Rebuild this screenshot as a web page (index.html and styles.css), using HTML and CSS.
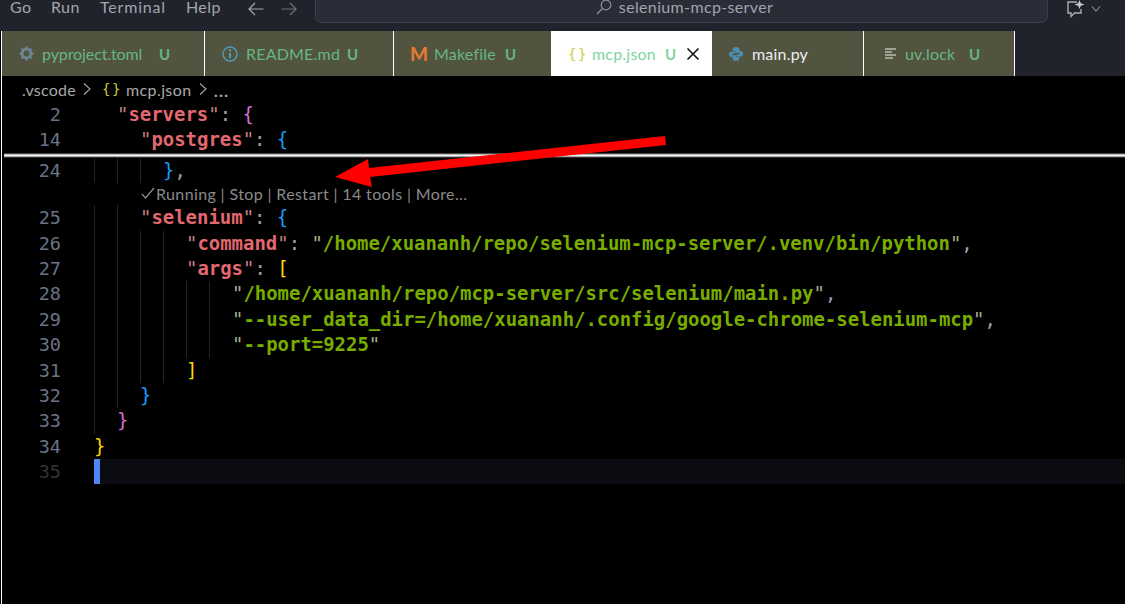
FILE: index.html
```html
<!DOCTYPE html>
<html lang="en">
<head>
<meta charset="utf-8">
<title>selenium-mcp-server</title>
<link rel="stylesheet" href="styles.css">
</head>
<body>
<div class="app">
  <header class="titlebar">
    <nav class="menu"><span class="m-go">Go</span><span class="m-run">Run</span><span class="m-term">Terminal</span><span class="m-help">Help</span></nav>
    <div class="nav-arrows">
      <svg width="16" height="14" viewBox="0 0 16 14"><path d="M15.5 7H1M7 1 1 7l6 6" fill="none" stroke="#a3a8b0" stroke-width="1.2"/></svg>
      <svg width="16" height="14" viewBox="0 0 16 14"><path d="M.5 7H15M9 1l6 6-6 6" fill="none" stroke="#6d727b" stroke-width="1.2"/></svg>
    </div>
    <div class="command">
      <svg width="16" height="16" viewBox="0 0 16 16"><circle cx="10" cy="6" r="4.8" fill="none" stroke="#8d929a" stroke-width="1.2"/><path d="M6.5 9.5 1 15" stroke="#8d929a" stroke-width="1.3"/></svg>
      <span>selenium-mcp-server</span>
    </div>
    <div class="chat">
      <svg width="20" height="18" viewBox="0 0 20 18"><path d="M11 2H2v11h3v3.5L8.5 13H15V9" fill="none" stroke="#a9aeb6" stroke-width="1.4"/><path d="M13.5 0l1.3 3.2L18.500 4.500 14.800 5.800 13.500 9 12.200 5.800 8.500 4.500 12.200 3.200z" fill="#c6cad2"/></svg>
      <svg width="10" height="6" viewBox="0 0 10 6"><path d="M1 .5 5 5 9 .5" fill="none" stroke="#8d929a" stroke-width="1.1"/></svg>
    </div>
  </header>
  <main class="main">
    <div class="tabs">
      <div class="tab t1">
        <svg class="ic-gear" width="15" height="15" viewBox="0 0 16 16"><circle cx="8" cy="8" r="4.6" fill="none" stroke="#6f8792" stroke-width="3"/><path d="M8 .5v3M8 12.500v3M.5 8h3M12.500 8h3M2.700 2.700l2.100 2.100M11.200 11.200l2.100 2.100M13.300 2.700l-2.100 2.100M4.800 11.200l-2.100 2.100" stroke="#6f8792" stroke-width="2.400"/></svg>
        <span class="name">pyproject.toml</span><b class="u">U</b>
      </div>
      <div class="tab t2">
        <svg width="16" height="16" viewBox="0 0 16 16"><circle cx="8" cy="8" r="7" fill="none" stroke="#519aba" stroke-width="1.400"/><path d="M8 7v5.200" stroke="#519aba" stroke-width="2"/><circle cx="8" cy="4.500" r="1.200" fill="#519aba"/></svg>
        <span class="name">README.md</span><b class="u">U</b>
      </div>
      <div class="tab t3">
        <span class="ic-m">M</span>
        <span class="name">Makefile</span><b class="u">U</b>
      </div>
      <div class="tab active">
        <span class="ic-json">{}</span>
        <span class="name">mcp.json</span><b class="u">U</b>
        <svg class="close" width="14" height="14" viewBox="0 0 14 14"><path d="M1.500 1.500l11 11M12.500 1.500l-11 11" stroke="#111" stroke-width="1.600"/></svg>
      </div>
      <div class="tab t5">
        <svg width="14" height="14" viewBox="0 0 14 14"><path d="M7 0C4.500 0 3.700 1 3.700 2.300V4H7.200v.6H2.300C1 4.600 0 5.600 0 7.200s1 2.900 2.200 2.900h1.300V8.400c0-1.300 1-2.300 2.300-2.300h2.900c1 0 1.800-.8 1.800-1.900V2.300C10.500 1 9.300 0 7 0z" fill="#4b8fb5"/><path d="M7 14c2.500 0 3.300-1 3.300-2.300V10H6.800v-.6h4.900c1.300 0 2.300-1 2.300-2.600s-1-2.900-2.200-2.900h-1.300v1.700c0 1.300-1 2.300-2.300 2.300H5.300c-1 0-1.800.8-1.800 1.900v1.900C3.500 13 4.700 14 7 14z" fill="#4b8fb5"/></svg>
        <span class="name white">main.py</span>
      </div>
      <div class="tab t6">
        <svg width="12" height="14" viewBox="0 0 12 14"><path d="M0 2h11M0 5h7M0 8h11M0 11h8" stroke="#b9bdb0" stroke-width="1.500"/></svg>
        <span class="name">uv.lock</span><b class="u">U</b>
      </div>
    </div>
    <div class="crumbs">
      <span>.vscode</span>
      <svg class="chev" width="8" height="14" viewBox="0 0 8 14"><path d="M1 1.500 7 7l-6 5.500" fill="none" stroke="#a8a8a8" stroke-width="1.100"/></svg>
      <span class="ic-json crumb-json">{}</span>
      <span class="crumb-file">mcp.json</span>
      <svg class="chev" width="8" height="14" viewBox="0 0 8 14"><path d="M1 1.500 7 7l-6 5.500" fill="none" stroke="#a8a8a8" stroke-width="1.100"/></svg>
      <span class="dots">…</span>
    </div>
    <div class="line"><span class="num">2</span><span class="sp"></span><span class="code"><i class="kq">"</i><i class="key">servers</i><i class="kq">"</i><i class="pn">: </i><i class="pink">{</i></span></div>
    <div class="line"><span class="num">14</span><span class="sp"></span><span class="sp"></span><span class="code"><i class="kq">"</i><i class="key">postgres</i><i class="kq">"</i><i class="pn">: </i><i class="blue">{</i></span></div>
    <div class="sep"></div>
    <div class="line"><span class="num">24</span><span class="ind"></span><span class="ind"></span><span class="ind"></span><span class="code"><i class="blue">}</i><i class="pn">,</i></span></div>
    <div class="lens">
      <svg width="14" height="12" viewBox="0 0 14 12"><path d="M1 7l3.500 4L13 1" fill="none" stroke="#8d8d8d" stroke-width="1.200"/></svg>
      <span>Running | Stop | Restart | 14 tools | More...</span>
    </div>
    <div class="line"><span class="num">25</span><span class="ind"></span><span class="ind"></span><span class="code"><i class="kq">"</i><i class="key">selenium</i><i class="kq">"</i><i class="pn">: </i><i class="blue">{</i></span></div>
    <div class="line"><span class="num">26</span><span class="ind"></span><span class="ind"></span><span class="ind"></span><span class="ind"></span><span class="code"><i class="kq">"</i><i class="key">command</i><i class="kq">"</i><i class="pn">: </i><i class="sq">"</i><i class="str">/home/xuananh/repo/selenium-mcp-server/.venv/bin/python</i><i class="sq">"</i><i class="pn">,</i></span></div>
    <div class="line"><span class="num">27</span><span class="ind"></span><span class="ind"></span><span class="ind"></span><span class="ind"></span><span class="code"><i class="kq">"</i><i class="key">args</i><i class="kq">"</i><i class="pn">: </i><i class="gold">[</i></span></div>
    <div class="line"><span class="num">28</span><span class="ind"></span><span class="ind"></span><span class="ind"></span><span class="ind"></span><span class="ind"></span><span class="ind"></span><span class="code"><i class="sq">"</i><i class="str">/home/xuananh/repo/mcp-server/src/selenium/main.py</i><i class="sq">"</i><i class="pn">,</i></span></div>
    <div class="line"><span class="num">29</span><span class="ind"></span><span class="ind"></span><span class="ind"></span><span class="ind"></span><span class="ind"></span><span class="ind"></span><span class="code"><i class="sq">"</i><i class="str">--user_data_dir=/home/xuananh/.config/google-chrome-selenium-mcp</i><i class="sq">"</i><i class="pn">,</i></span></div>
    <div class="line"><span class="num">30</span><span class="ind"></span><span class="ind"></span><span class="ind"></span><span class="ind"></span><span class="ind"></span><span class="ind"></span><span class="code"><i class="sq">"</i><i class="str">--port=9225</i><i class="sq">"</i></span></div>
    <div class="line"><span class="num">31</span><span class="ind"></span><span class="ind"></span><span class="ind"></span><span class="ind"></span><span class="code"><i class="gold">]</i></span></div>
    <div class="line"><span class="num">32</span><span class="ind"></span><span class="ind"></span><span class="code"><i class="blue">}</i></span></div>
    <div class="line"><span class="num">33</span><span class="ind"></span><span class="code"><i class="pink">}</i></span></div>
    <div class="line"><span class="num">34</span><span class="code"><i class="gold">}</i></span></div>
    <div class="line current"><span class="num dim">35</span><span class="cursor"></span><span class="hl"></span></div>
  </main>
  <svg class="arrow" width="340" height="60" viewBox="330 130 340 60"><polygon points="665,136 666,145 370,177 372,187 335,177 368,159 369,168" fill="#ff0000"/></svg>
</div>
</body>
</html>
```
FILE: styles.css
```css
* { box-sizing: border-box; }
html, body { margin: 0; height: 100%; background: #000; overflow: hidden; }
.app { position: relative; width: 1125px; height: 604px; font-family: "Lato", "Noto Sans", sans-serif; }

.titlebar { display: flex; height: 31px; background: #20232b; color: #a1a6ae; font-size: 16px; overflow: hidden; }
.menu { display: flex; height: 14px; line-height: 14px; padding-left: 10px; letter-spacing: .4px; }
.menu span { display: block; }
.m-go { width: 41px; }
.m-run { width: 49px; }
.m-term { width: 86px; letter-spacing: .8px; }
.m-help { width: 48px; }
.nav-arrows { display: flex; gap: 17px; padding: 2px 0 0 14px; width: 78px; }
.command { display: flex; align-items: center; justify-content: center; gap: 7px; width: 733px; height: 23px; margin-left: 3px; padding: 0 0 8px 6px; background: #2a2d37; border: 1px solid #3c3f49; border-top: 0; border-radius: 0 0 7px 7px; color: #9fa4ac; letter-spacing: .35px; line-height: 14px; }
.chat { display: flex; align-items: center; gap: 5px; height: 18px; margin-left: 18px; }

.main { margin-left: 1px; border-left: 1px solid #fff; height: 573px; background: #000; }

.tabs { display: flex; height: 45px; background: #20232b; }
.tab { display: flex; align-items: center; flex: none; background: #52543f; border-right: 1px solid #fff; color: #66b77f; font-size: 16px; letter-spacing: .2px; }
.tab svg, .tab .ic-m, .tab .ic-json { flex: none; }
.name { display: block; }
.white { color: #eceff1; }
.u { font-weight: 700; font-size: 15px; color: #66b77f; }
.t1 { width: 203px; padding-left: 17px; }
.t1 .name { width: 117px; margin-left: 8px; letter-spacing: -.1px; }
.t2 { width: 189px; padding-left: 17px; }
.t2 .name { width: 101px; margin-left: 8px; }
.t3 { width: 157px; padding-left: 16px; border-right: 0; }
.t3 .name { width: 71px; margin-left: 8px; }
.ic-m { width: 16px; color: #e37933; font-weight: 900; font-size: 19px; line-height: 1; }
.active { width: 161px; padding-left: 17px; background: #fff; border-right: 0; color: #7fd3a0; }
.active .name { width: 73px; margin-left: 6px; }
.active .u { color: #7fd3a0; }
.close { margin-left: 10px; }
.ic-json { color: #cbcb41; font-family: "DejaVu Sans Mono", monospace; font-weight: 400; font-size: 14px; width: 18px; white-space: nowrap; letter-spacing: 1.6px; }
.t5 { width: 152px; padding-left: 17px; }
.t5 .name { margin-left: 9px; }
.t6 { width: 151px; padding-left: 21px; }
.t6 .name { width: 64px; margin-left: 8px; }

.crumbs { display: flex; align-items: center; height: 26px; padding-left: 20px; color: #a9a9a9; font-size: 16px; letter-spacing: .25px; }
.chev { margin: 0 7px 0 7px; }
.crumb-json { margin-right: 6px; margin-left: 4px; }
.crumb-file { letter-spacing: .4px; }
.dots { font-size: 20px; letter-spacing: 0; line-height: 1; }

.line { display: flex; height: 25.4px; line-height: 25.4px; font-family: "DejaVu Sans Mono", monospace; font-size: 18.95px; font-weight: 700; }
.num { width: 59px; margin-right: 33px; text-align: right; color: #6a7488; font-weight: 400; font-size: 18.500px; }
.dim { color: #2f343b; }
.ind { width: 23px; flex: none; border-left: 1px solid #232323; }
.sp { width: 23px; flex: none; }
.code { white-space: pre; }
.code i { font-style: normal; }
.key { color: #e3686f; }
.kq { color: #c97f82; font-weight: 400; }
.pn { color: #98a3b0; font-weight: 400; }
.str { color: #78ad00; }
.sq { color: #a7b08f; font-weight: 400; }
.gold { color: #ffd700; font-weight: 400; }
.pink { color: #da70d6; font-weight: 400; }
.blue { color: #179fff; font-weight: 400; }

.sep { height: 5px; margin-left: 2px; background: linear-gradient(#000, #8a8a8a 20%, #fff 45%, #eee 60%, #444 85%, #000); }
.lens { display: flex; align-items: center; gap: 1px; height: 22px; padding: 0 0 2px 139px; color: #8a8a8a; font-size: 16px; letter-spacing: .37px; }

.current .cursor { width: 6px; flex: none; background: #4f86f7; }
.current .hl { flex: 1; background: #0b0c11; }

.arrow { position: absolute; left: 330px; top: 130px; }
```
